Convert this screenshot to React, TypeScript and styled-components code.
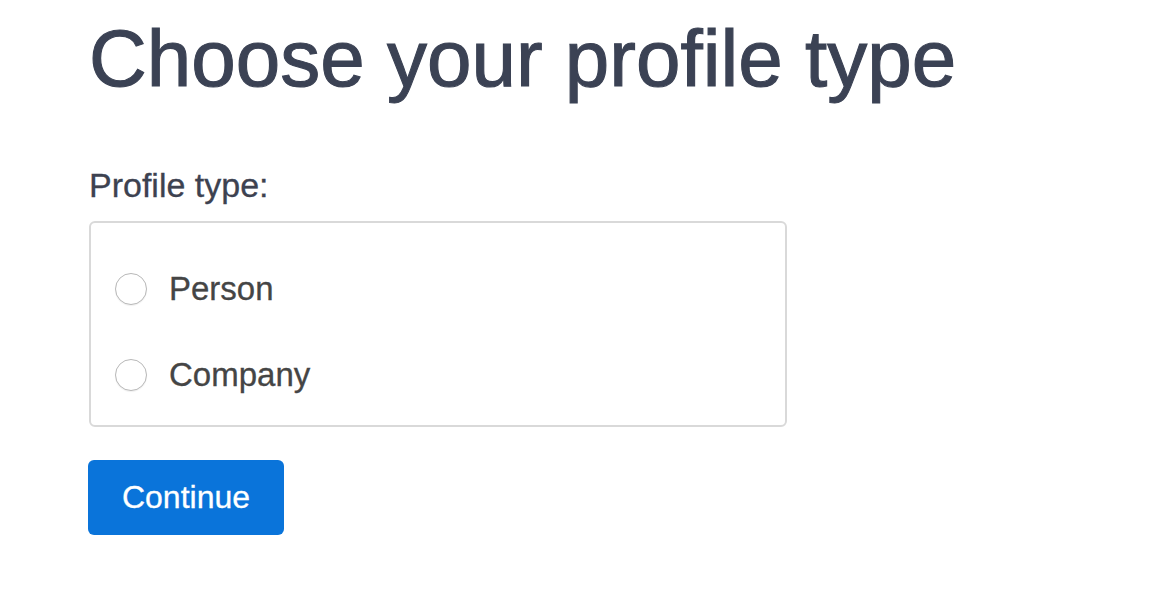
import React, { useState } from "react";
import styled, { createGlobalStyle } from "styled-components";

const GlobalStyle = createGlobalStyle`
  body {
    margin: 0;
    background: #ffffff;
    font-family: "Liberation Sans", Arial, sans-serif;
  }
`;

type ProfileOption = {
  value: string;
  label: string;
};

const options: ProfileOption[] = [
  { value: "person", label: "Person" },
  { value: "company", label: "Company" },
];

const App: React.FC = () => {
  const [profile, setProfile] = useState<string>("");

  return (
    <>
      <GlobalStyle />
      <Page>
        <Title>Choose your profile type</Title>
        <Form onSubmit={(e) => e.preventDefault()}>
          <FieldLabel>Profile type:</FieldLabel>
          <OptionsBox>
            {options.map((option) => (
              <OptionRow key={option.value}>
                <RadioInput
                  type="radio"
                  name="profile"
                  value={option.value}
                  checked={profile === option.value}
                  onChange={() => setProfile(option.value)}
                />
                <OptionText>{option.label}</OptionText>
              </OptionRow>
            ))}
          </OptionsBox>
          <SubmitButton type="submit">Continue</SubmitButton>
        </Form>
      </Page>
    </>
  );
};

export default App;

// Styled-Components
// Page wrapper
const Page = styled.main`
  padding: 11px 0 0 89px;
`;

// Page title
const Title = styled.h1`
  margin: 0;
  /* Font */
  font-size: 80px;
  line-height: 96px;
  font-weight: 400;
  color: #3b4254;
  -webkit-text-stroke: 1.1px #3b4254;
`;

// Form
const Form = styled.form`
  display: flex;
  flex-direction: column;
  align-items: flex-start;
  margin-top: 58px;
`;

// Label above the options
const FieldLabel = styled.div`
  font-size: 34px;
  line-height: 40px;
  color: #3d4250;
  -webkit-text-stroke: 0.3px #3d4250;
`;

// Bordered box holding the radios
const OptionsBox = styled.div`
  box-sizing: border-box;
  width: 698px;
  display: flex;
  flex-direction: column;
  gap: 46px;
  /* Margin, Padding, Border */
  margin-top: 16px;
  padding: 46px 24px 30px;
  border: 2px solid #d9d9d9;
  border-radius: 6px;
`;

// One radio row
const OptionRow = styled.label`
  display: flex;
  align-items: center;
  gap: 22px;
  height: 40px;
  cursor: pointer;
`;

// Radio circle
const RadioInput = styled.input`
  appearance: none;
  box-sizing: border-box;
  width: 32px;
  height: 32px;
  margin: 0;
  border: 1.5px solid #b8b8b8;
  border-radius: 50%;
  background: #ffffff;
  box-shadow: 0 1px 1px rgba(0, 0, 0, 0.06);
  cursor: pointer;

  &:checked {
    border: 9px solid #0a74da;
  }
`;

// Radio text
const OptionText = styled.span`
  font-size: 33px;
  line-height: 40px;
  color: #454545;
  -webkit-text-stroke: 0.3px #454545;
`;

// Continue button
const SubmitButton = styled.button`
  box-sizing: border-box;
  width: 196px;
  height: 75px;
  margin: 33px 0 0 -1px;
  border: none;
  border-radius: 6px;
  background: #0a74da;
  /* Font */
  font-family: "Liberation Sans", Arial, sans-serif;
  font-size: 32px;
  color: #ffffff;
  -webkit-text-stroke: 0.3px #ffffff;
  cursor: pointer;
`;
